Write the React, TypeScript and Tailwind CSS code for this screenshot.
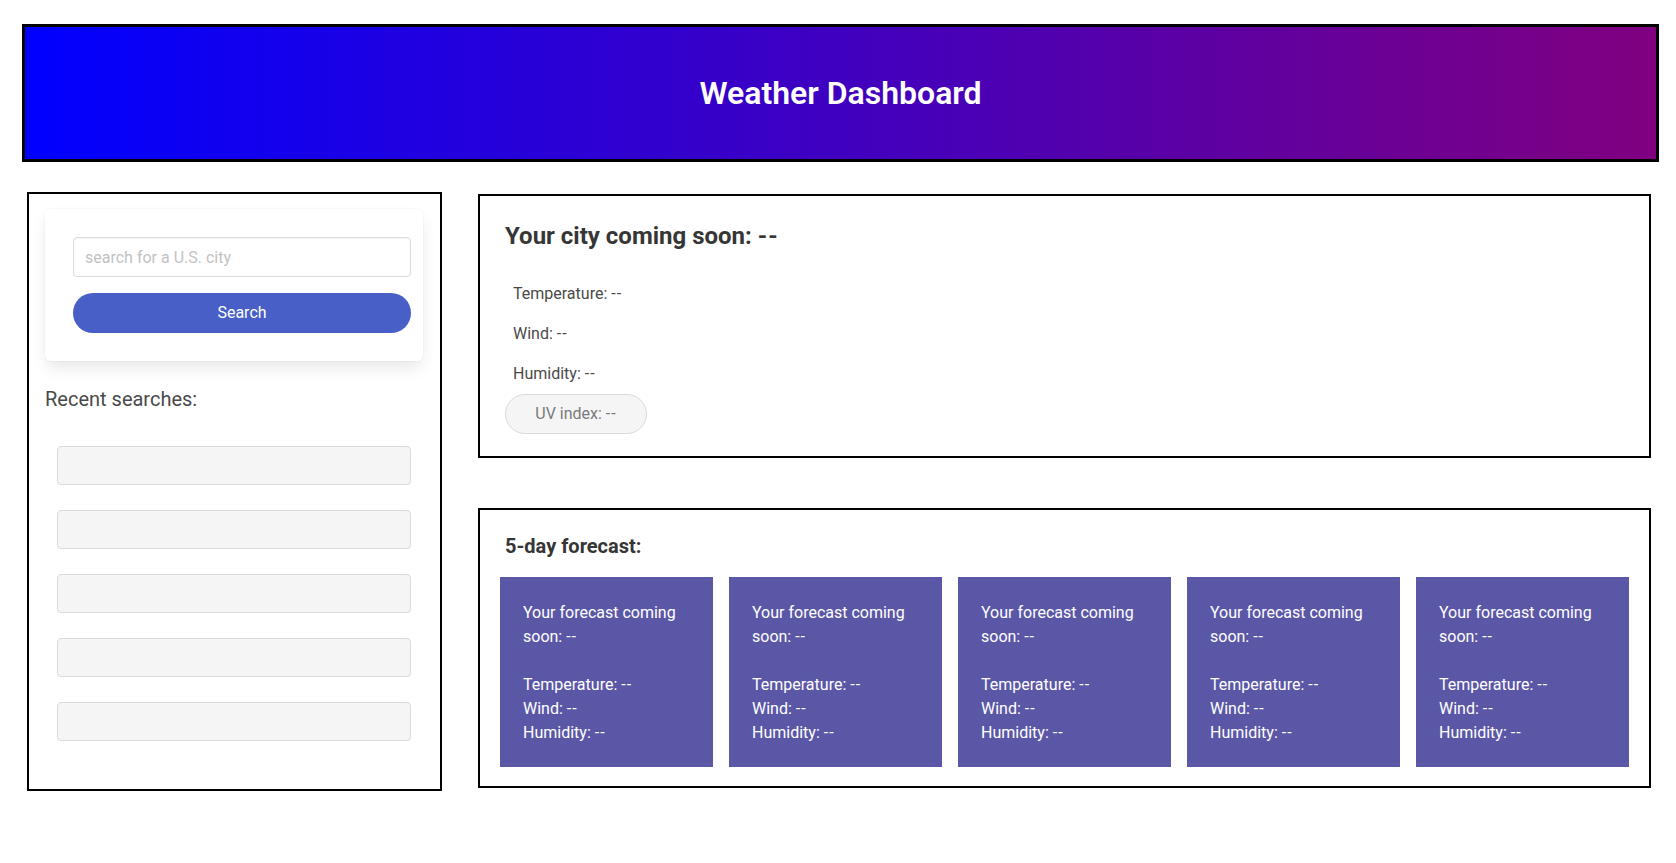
export default function App() {
  const recents = [0, 1, 2, 3, 4];
  const days = [0, 1, 2, 3, 4];
  const dash = <span className="tracking-[1px]">--</span>;
  return (
    <div className="min-h-screen bg-white font-['Segoe_UI',Roboto,sans-serif] text-[16px] leading-[1.5] text-[#4a4a4a]">
      <header className="ml-[22px] mt-[24px] flex h-[138px] w-[1637px] items-center justify-center border-[3px] border-black bg-[linear-gradient(to_right,#0000ff,#800080)]">
        <h1 className="text-[32px] font-semibold leading-[1.125] text-white">Weather Dashboard</h1>
      </header>

      <div className="mt-[30px] flex items-start">
        <aside className="ml-[27px] h-[599px] w-[415px] border-2 border-black pt-[15px]">
          <div className="ml-[16px] w-[378px] rounded-[6px] bg-white py-[28px] pl-[28px] pr-[12px] shadow-[0_8px_16px_-2px_rgba(10,10,10,0.1),0_0_0_1px_rgba(10,10,10,0.02)]">
            <input
              type="text"
              placeholder="search for a U.S. city"
              className="block h-[40px] w-[338px] rounded-[4px] border border-[#dbdbdb] bg-white px-[11px] text-[16px] text-[#363636] shadow-[inset_0_1px_2px_rgba(10,10,10,0.05)] outline-none placeholder:text-[#c2c2c2]"
            />
            <button className="mt-[16px] block h-[40px] w-[338px] rounded-full bg-[#485fc7] text-[16px] text-white">
              Search
            </button>
          </div>
          <p className="ml-[16px] mt-[26px] text-[20px] leading-[1.25] text-[#4a4a4a]">Recent searches:</p>
          <div className="ml-[28px] mt-[34px] flex w-[354px] flex-col gap-[25px]">
            {recents.map((r) => (
              <div key={r} className="h-[39px] rounded-[4px] border border-[#dbdbdb] bg-[#f5f5f5]" />
            ))}
          </div>
        </aside>

        <main className="ml-[36px] mt-[2px] flex w-[1173px] flex-col gap-[50px]">
          <section className="h-[264px] border-2 border-black pb-[24px] pl-[25px] pt-[27px]">
            <h2 className="text-[24px] font-bold leading-[1.125] text-[#363636]">Your city coming soon: {dash}</h2>
            <div className="mt-[32px] flex flex-col gap-[16px] pl-[8px]">
              <p>Temperature: {dash}</p>
              <p>Wind: {dash}</p>
              <p>Humidity: {dash}</p>
            </div>
            <div className="mt-[8px] flex h-[40px] w-[142px] items-center justify-center rounded-full border border-[#dbdbdb] bg-[#f5f5f5] text-[#7a7a7a]">
              <span>UV index: {dash}</span>
            </div>
          </section>

          <section className="h-[280px] border-2 border-black px-[20px] pb-[19px] pt-[24px]">
            <h3 className="pl-[5px] text-[20px] font-bold leading-[1.25] text-[#363636]">5-day forecast:</h3>
            <div className="mt-[18px] flex gap-[16px]">
              {days.map((d) => (
                <div key={d} className="h-[190px] w-[213px] bg-[#5b57a7] px-[23px] pt-[24px] text-white">
                  <p>
                    Your forecast coming
                    <br />
                    soon: {dash}
                  </p>
                  <p className="mt-[24px]">Temperature: {dash}</p>
                  <p>Wind: {dash}</p>
                  <p>Humidity: {dash}</p>
                </div>
              ))}
            </div>
          </section>
        </main>
      </div>
    </div>
  );
}
